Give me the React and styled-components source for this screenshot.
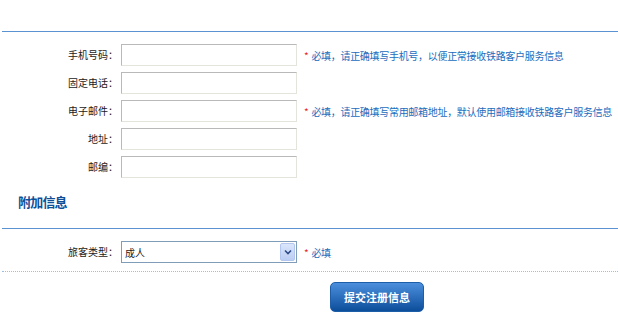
import React from "react";
import styled, { createGlobalStyle } from "styled-components";

const Global = createGlobalStyle`
  html, body { margin: 0; padding: 0; background: #fff; }
  body { font-family: "Noto Sans CJK SC", "Noto Sans", sans-serif; color: #222; }
`;

const Page = styled.div`
  width: 618px;
  padding-top: 31px;
`;

const Divider = styled.div`
  margin-left: 2px;
  border-top: 1px ${(p) => (p.$dashed ? "dotted #9fbde0" : "solid #5b92d2")};
`;

const Form = styled.div`
  display: flex;
  flex-direction: column;
  gap: 6px;
  padding-top: 12px;
`;

const Row = styled.div`
  display: flex;
  align-items: center;
  height: 22px;
`;

const Label = styled.label`
  width: 118px;
  text-align: right;
  font-size: 10px;
  line-height: 22px;
  color: #1a1a1a;
  margin-right: 3px;
  white-space: nowrap;
`;

const Input = styled.input`
  box-sizing: border-box;
  width: 176px;
  height: 22px;
  margin: 0;
  padding: 0 3px;
  border: 1px solid;
  border-color: #b9b9b9 #e4e4dc #e4e4dc #b9b9b9;
  background: #fff;
  outline: none;
  font-size: 10px;
`;

const Hint = styled.span`
  margin-left: 7px;
  font-size: 10px;
  color: #1a6cbd;
  white-space: nowrap;
  letter-spacing: -0.3px;
`;

const Star = styled.span`
  color: #e8261f;
  margin-right: 3px;
`;

const SectionTitle = styled.div`
  box-sizing: border-box;
  height: 50px;
  padding: 15px 0 0 18px;
  font-size: 13px;
  line-height: 18px;
  font-weight: bold;
  letter-spacing: -0.8px;
  color: #0f4f98;
`;

const SelectBox = styled.div`
  box-sizing: border-box;
  width: 176px;
  height: 22px;
  border: 1px solid #7f9db9;
  display: flex;
  align-items: center;
  justify-content: space-between;
  padding: 0 1px 0 3px;
  background: #fff;
`;

const SelectText = styled.span`
  font-size: 10px;
  color: #222;
`;

const SelectButton = styled.span`
  box-sizing: border-box;
  width: 15px;
  height: 18px;
  border: 1px solid #b3c6ef;
  border-radius: 2px;
  background: linear-gradient(#dbe6fb, #bccdf4);
  display: flex;
  align-items: center;
  justify-content: center;
`;

const Bottom = styled.div`
  padding-top: 10px;
  padding-left: 330px;
`;

const SelectSection = styled.div`
  padding-top: 12px;
  padding-bottom: 8px;
`;

const Submit = styled.button`
  width: 94px;
  height: 30px;
  border: 1px solid #1c5ea8;
  border-radius: 5px;
  background: linear-gradient(#4b8fdc, #0d4e9b);
  color: #fff;
  font-family: inherit;
  font-weight: bold;
  font-size: 11px;
  padding: 0;
  cursor: pointer;
`;

const fields = [
  { label: "手机号码：", hint: "必填，请正确填写手机号，以便正常接收铁路客户服务信息" },
  { label: "固定电话：" },
  { label: "电子邮件：", hint: "必填，请正确填写常用邮箱地址，默认使用邮箱接收铁路客户服务信息" },
  { label: "地址：" },
  { label: "邮编：" },
];

export default function App() {
  return (
    <Page>
      <Global />
      <Divider />
      <Form>
        {fields.map((f) => (
          <Row key={f.label}>
            <Label>{f.label}</Label>
            <Input type="text" />
            {f.hint && (
              <Hint>
                <Star>*</Star>
                {f.hint}
              </Hint>
            )}
          </Row>
        ))}
      </Form>
      <SectionTitle>附加信息</SectionTitle>
      <Divider />
      <SelectSection>
        <Row>
          <Label>旅客类型：</Label>
          <SelectBox>
            <SelectText>成人</SelectText>
            <SelectButton>
              <svg width="8" height="6" viewBox="0 0 8 6">
                <path d="M1 1.5 L4 4.5 L7 1.5" fill="none" stroke="#2c4a86" strokeWidth="1.6" />
              </svg>
            </SelectButton>
          </SelectBox>
          <Hint>
            <Star>*</Star>
            必填
          </Hint>
        </Row>
      </SelectSection>
      <Divider $dashed />
      <Bottom>
        <Submit type="button">提交注册信息</Submit>
      </Bottom>
    </Page>
  );
}
